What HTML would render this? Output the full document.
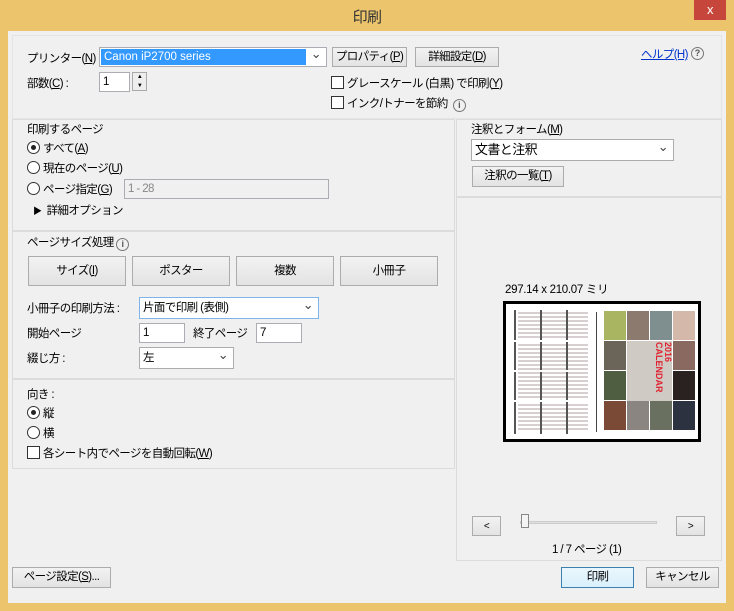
<!DOCTYPE html>
<html><head><meta charset="utf-8"><style>
*{box-sizing:border-box;margin:0;padding:0}
body{width:734px;height:611px;background:#ebc46c;font-family:"Liberation Sans","Noto Sans CJK JP",sans-serif;font-size:11.5px;letter-spacing:-0.6px;color:#000;position:relative;overflow:hidden}
.a{position:absolute;white-space:nowrap}
.client{position:absolute;left:8px;top:31px;width:718px;height:572px;background:#f0f0f0}
.panel{position:absolute;background:#f0f0f0;border:1px solid #dcdcdc}
.btn{position:absolute;white-space:nowrap;background:linear-gradient(#f2f2f2,#e3e3e3);border:1px solid #acacac;text-align:center;line-height:19px}
.inp{position:absolute;white-space:nowrap;background:#fff;border:1px solid #abadb3;padding-left:3px;line-height:18px}
.rb{display:inline-block;width:13px;height:13px;border:1px solid #333;border-radius:50%;background:#fff;vertical-align:-2px;margin-right:3px;position:relative}
.rb.on::after{content:"";position:absolute;left:3px;top:3px;width:5px;height:5px;border-radius:50%;background:#222}
.cb{display:inline-block;width:13px;height:13px;border:1px solid #333;background:#fff;vertical-align:-2px;margin-right:3px}
.dd::after{content:"⌄";position:absolute;right:5px;top:-3px;font-size:13px;color:#444}
.info{display:inline-block;width:13px;height:13px;border:1px solid #777;border-radius:50%;font-size:9px;line-height:11px;text-align:center;color:#555;vertical-align:-1px;font-weight:bold;letter-spacing:0}
.ph{position:absolute;width:22px;height:29px}
</style></head><body>
<div class="a" style="left:0;top:6px;width:734px;text-align:center;font-size:15px;color:#333">印刷</div>
<div class="a" style="left:694px;top:0;width:32px;height:20px;background:#c7463c;color:#fff;text-align:center;line-height:19px;font-size:13px">x</div>
<div class="client"></div>
<div class="panel" style="left:12px;top:35px;width:710px;height:84px;border-color:#e4e4e4"></div>
<div class="a" style="left:27px;top:50px">プリンター(<u>N</u>) :</div>
<div class="inp dd" style="left:99px;top:47px;width:228px;height:20px;background:#fff;padding:1px"><div style="background:#3399ff;color:#fff;width:205px;height:16px;line-height:16px;padding-left:3px;letter-spacing:0">Canon iP2700 series</div></div>
<div class="btn" style="left:332px;top:47px;width:75px;height:20px">プロパティ(<u>P</u>)</div>
<div class="btn" style="left:415px;top:47px;width:84px;height:20px">詳細設定(<u>D</u>)</div>
<div class="a" style="left:641px;top:46px;color:#0033cc;text-decoration:underline">ヘルプ(H)</div>
<div class="a" style="left:691px;top:46px"><span class="info">?</span></div>
<div class="a" style="left:27px;top:75px">部数(<u>C</u>) :</div>
<div class="inp" style="left:99px;top:72px;width:31px;height:20px">1</div>
<div class="a" style="left:132px;top:72px;width:15px;height:19px;border:1px solid #aaa;background:#eee;font-size:6px;line-height:9px;text-align:center">▲<br>▼</div>
<div class="a" style="left:331px;top:75px"><span class="cb"></span>グレースケール (白黒) で印刷(<u>Y</u>)</div>
<div class="a" style="left:331px;top:95px"><span class="cb"></span>インク/トナーを節約 &nbsp;<span class="info">i</span></div>

<div class="panel" style="left:12px;top:119px;width:443px;height:112px"></div>
<div class="a" style="left:27px;top:121px">印刷するページ</div>
<div class="a" style="left:27px;top:140px"><span class="rb on"></span>すべて(<u>A</u>)</div>
<div class="a" style="left:27px;top:160px"><span class="rb"></span>現在のページ(<u>U</u>)</div>
<div class="a" style="left:27px;top:181px"><span class="rb"></span>ページ指定(<u>G</u>)</div>
<div class="inp" style="left:124px;top:179px;width:205px;height:20px;background:#f0f0f0;color:#888">1 - 28</div>
<div class="a" style="left:33px;top:202px"><span style="font-size:9px">▶</span>&nbsp; 詳細オプション</div>

<div class="panel" style="left:12px;top:231px;width:443px;height:148px"></div>
<div class="a" style="left:27px;top:234px">ページサイズ処理 <span class="info">i</span></div>
<div class="btn" style="left:28px;top:256px;width:98px;height:30px;line-height:28px">サイズ(<u>I</u>)</div>
<div class="btn" style="left:132px;top:256px;width:98px;height:30px;line-height:28px">ポスター</div>
<div class="btn" style="left:236px;top:256px;width:98px;height:30px;line-height:28px">複数</div>
<div class="btn" style="left:340px;top:256px;width:98px;height:30px;line-height:28px">小冊子</div>
<div class="a" style="left:27px;top:300px">小冊子の印刷方法 :</div>
<div class="inp dd" style="left:139px;top:297px;width:180px;height:22px;border-color:#7eb4ea;line-height:20px">片面で印刷 (表側)</div>
<div class="a" style="left:27px;top:325px">開始ページ</div>
<div class="inp" style="left:139px;top:323px;width:46px;height:20px">1</div>
<div class="a" style="left:193px;top:325px">終了ページ</div>
<div class="inp" style="left:256px;top:323px;width:46px;height:20px">7</div>
<div class="a" style="left:27px;top:350px">綴じ方 :</div>
<div class="inp dd" style="left:139px;top:347px;width:95px;height:22px;line-height:20px;border-color:#acacac">左</div>

<div class="panel" style="left:12px;top:379px;width:443px;height:90px"></div>
<div class="a" style="left:27px;top:386px">向き :</div>
<div class="a" style="left:27px;top:405px"><span class="rb on"></span>縦</div>
<div class="a" style="left:27px;top:425px"><span class="rb"></span>横</div>
<div class="a" style="left:27px;top:445px"><span class="cb"></span>各シート内でページを自動回転(<u>W</u>)</div>

<div class="panel" style="left:456px;top:119px;width:266px;height:78px"></div>
<div class="a" style="left:471px;top:121px">注釈とフォーム(<u>M</u>)</div>
<div class="inp dd" style="left:471px;top:139px;width:203px;height:22px;line-height:20px;border-color:#acacac;font-size:13px">文書と注釈</div>
<div class="btn" style="left:472px;top:166px;width:92px;height:21px">注釈の一覧(<u>T</u>)</div>

<div class="panel" style="left:456px;top:197px;width:266px;height:364px"></div>
<div class="a" style="left:505px;top:281px;letter-spacing:-0.3px">297.14 x 210.07 ミリ</div>
<div class="a" style="left:503px;top:301px;width:198px;height:141px;border:3px solid #000;background:#fff;overflow:hidden">
 <div class="a" style="left:12px;top:8px;width:70px;height:120px;background:repeating-linear-gradient(0deg,#fff 0 2px,#d8d0d0 2px 4px)"></div>
 <div class="a" style="left:8px;top:6px;width:77px;height:124px;background:repeating-linear-gradient(90deg,#555 0 2px,transparent 2px 26px)"></div>
 <div class="a" style="left:8px;top:36px;width:77px;height:2px;background:#fff"></div>
 <div class="a" style="left:8px;top:66px;width:77px;height:2px;background:#fff"></div>
 <div class="a" style="left:8px;top:96px;width:77px;height:2px;background:#fff"></div>
 <div class="a" style="left:90px;top:8px;width:1px;height:120px;background:#444"></div>
 <div class="ph" style="left:98px;top:7px;background:#a9b560"></div>
 <div class="ph" style="left:121px;top:7px;background:#8c7a6e"></div>
 <div class="ph" style="left:144px;top:7px;background:#7f8e8e"></div>
 <div class="ph" style="left:167px;top:7px;background:#d4b8aa"></div>
 <div class="ph" style="left:98px;top:37px;background:#6a6558"></div>
 <div class="ph" style="left:121px;top:37px;width:45px;height:60px;background:#cfcbc4"></div>
 <div class="a" style="left:146px;top:38px;width:20px;height:58px;color:#e02030;font-weight:bold;font-size:9px;letter-spacing:0;writing-mode:vertical-rl;line-height:9px">2016<br>CALENDAR</div>
 <div class="ph" style="left:167px;top:37px;background:#8a6a60"></div>
 <div class="ph" style="left:98px;top:67px;background:#4f5e40"></div>
 <div class="ph" style="left:167px;top:67px;background:#2a2220"></div>
 <div class="ph" style="left:98px;top:97px;background:#7a4a36"></div>
 <div class="ph" style="left:121px;top:97px;background:#8a8580"></div>
 <div class="ph" style="left:144px;top:97px;background:#6a7060"></div>
 <div class="ph" style="left:167px;top:97px;background:#2c3240"></div>
</div>
<div class="btn" style="left:472px;top:516px;width:29px;height:20px;font-size:10px">&lt;</div>
<div class="a" style="left:520px;top:521px;width:137px;height:3px;background:#e0e0e0;border:1px solid #ccc"></div>
<div class="a" style="left:521px;top:514px;width:8px;height:14px;border:1px solid #888;background:#f4f4f4"></div>
<div class="btn" style="left:676px;top:516px;width:29px;height:20px;font-size:10px">&gt;</div>
<div class="a" style="left:552px;top:541px">1 / 7 ページ (1)</div>

<div class="btn" style="left:12px;top:567px;width:99px;height:21px">ページ設定(<u>S</u>)...</div>
<div class="btn" style="left:561px;top:567px;width:73px;height:21px;border-color:#3c7fb1;background:linear-gradient(#eaf6fd,#d9f0fc)">印刷</div>
<div class="btn" style="left:646px;top:567px;width:73px;height:21px">キャンセル</div>
</body></html>
